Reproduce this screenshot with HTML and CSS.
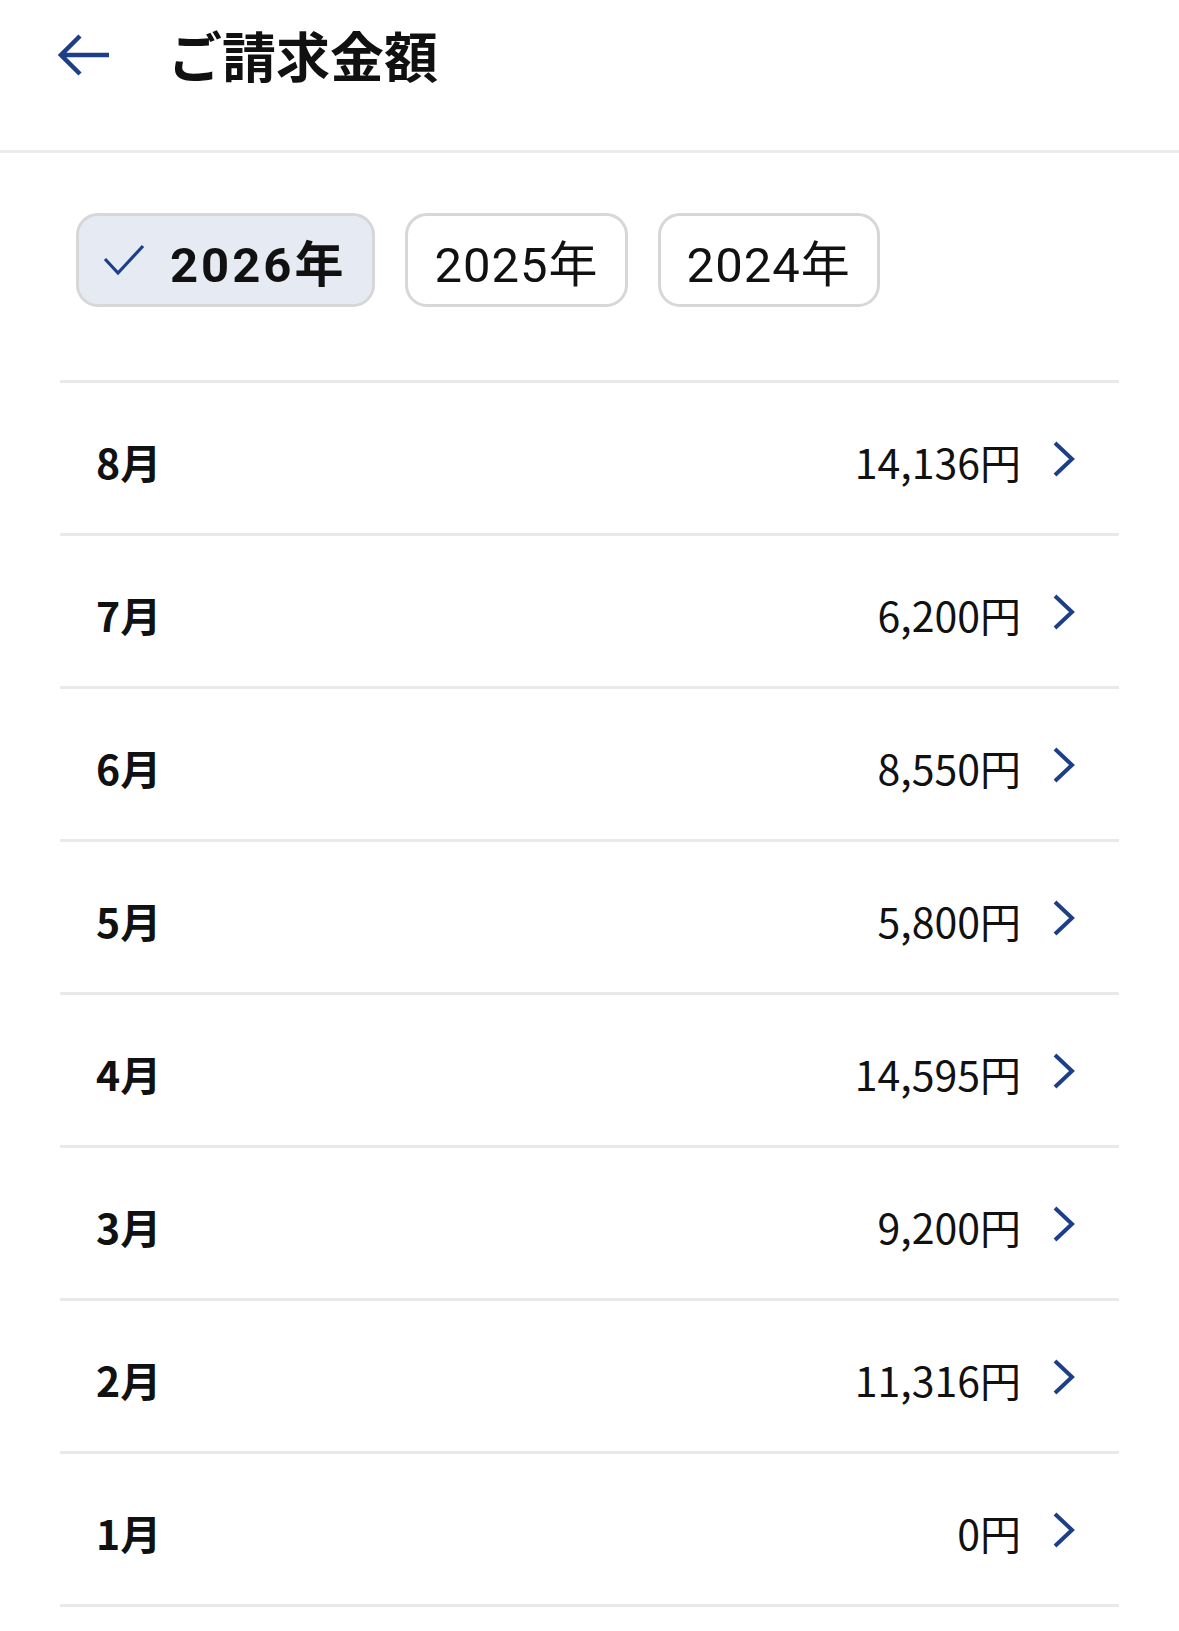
FILE: index.html
```html
<!DOCTYPE html>
<html lang="ja">
<head>
  <meta charset="UTF-8"/>
  <meta name="viewport" content="width=device-width,initial-scale=1"/>
  <title>ご請求金額</title>
  <link rel="stylesheet" href="styles.css">
</head>
<body>

  <header class="top-bar">
    <a class="back" href="#" aria-label="戻る">
      <svg width="52" height="42" viewBox="0 0 52 42">
        <path d="M22 2 L3 21 L22 40 M3 21 H51" fill="none" stroke="#1d3f88" stroke-width="4.5"/>
      </svg>
    </a>
    <h1>ご請求金額</h1>
  </header>

  <main id="bills">
    <div class="years">
      <button class="chip selected">
        <svg class="check" width="42" height="32" viewBox="0 0 42 32">
          <path d="M2 15 L15 29 L40 2" fill="none" stroke="#1d3f88" stroke-width="3.2"/>
        </svg>
        <span>2026年</span>
      </button>
      <button class="chip">2025年</button>
      <button class="chip">2024年</button>
    </div>

    <ul class="months">
      <li class="row"><span class="month">8月</span><span class="amount">14,136円</span><svg class="chev" width="22" height="36" viewBox="0 0 22 36"><path d="M2 2 L19 18 L2 34" fill="none" stroke="#1d3f88" stroke-width="4"/></svg></li>
      <li class="row"><span class="month">7月</span><span class="amount">6,200円</span><svg class="chev" width="22" height="36" viewBox="0 0 22 36"><path d="M2 2 L19 18 L2 34" fill="none" stroke="#1d3f88" stroke-width="4"/></svg></li>
      <li class="row"><span class="month">6月</span><span class="amount">8,550円</span><svg class="chev" width="22" height="36" viewBox="0 0 22 36"><path d="M2 2 L19 18 L2 34" fill="none" stroke="#1d3f88" stroke-width="4"/></svg></li>
      <li class="row"><span class="month">5月</span><span class="amount">5,800円</span><svg class="chev" width="22" height="36" viewBox="0 0 22 36"><path d="M2 2 L19 18 L2 34" fill="none" stroke="#1d3f88" stroke-width="4"/></svg></li>
      <li class="row"><span class="month">4月</span><span class="amount">14,595円</span><svg class="chev" width="22" height="36" viewBox="0 0 22 36"><path d="M2 2 L19 18 L2 34" fill="none" stroke="#1d3f88" stroke-width="4"/></svg></li>
      <li class="row"><span class="month">3月</span><span class="amount">9,200円</span><svg class="chev" width="22" height="36" viewBox="0 0 22 36"><path d="M2 2 L19 18 L2 34" fill="none" stroke="#1d3f88" stroke-width="4"/></svg></li>
      <li class="row"><span class="month">2月</span><span class="amount">11,316円</span><svg class="chev" width="22" height="36" viewBox="0 0 22 36"><path d="M2 2 L19 18 L2 34" fill="none" stroke="#1d3f88" stroke-width="4"/></svg></li>
      <li class="row"><span class="month">1月</span><span class="amount">0円</span><svg class="chev" width="22" height="36" viewBox="0 0 22 36"><path d="M2 2 L19 18 L2 34" fill="none" stroke="#1d3f88" stroke-width="4"/></svg></li>
    </ul>
  </main>

</body>
</html>
```

FILE: styles.css
```css
* {
  box-sizing: border-box;
}
body {
  margin: 0;
  font-family: 'Noto Sans CJK JP', sans-serif;
  background: #fff;
  color: #111;
}

.top-bar {
  display: flex;
  align-items: center;
  height: 153px;
  padding: 0 58px 40px;
  border-bottom: 3px solid #ececec;
}

.back {
  display: flex;
  margin-right: 58px;
}

.top-bar h1 {
  margin: 0;
  font-size: 54px;
  font-weight: 700;
  line-height: 1;
}

#bills {
  padding: 0 60px;
}

.years {
  display: flex;
  gap: 30px;
  padding: 60px 0 73px 16px;
}

.chip {
  display: flex;
  align-items: center;
  gap: 25px;
  height: 94px;
  padding: 0 26px;
  border: 3px solid #d7d7d7;
  border-radius: 22px;
  background: #fff;
  color: #111;
  font-family: Roboto, 'Noto Sans CJK JP', sans-serif;
  font-size: 49px;
  letter-spacing: 1px;
}

.chip.selected {
  background: #e6eaf3;
  font-weight: 700;
  padding-left: 24px;
  letter-spacing: 3px;
}

.months {
  list-style: none;
  margin: 0;
  padding: 0;
  border-top: 3px solid #e9e9e9;
}

.row {
  display: flex;
  align-items: center;
  height: 153px;
  padding: 6px 44px 0 36px;
  border-bottom: 3px solid #e9e9e9;
}

.month {
  flex: 1;
  font-size: 41px;
  font-weight: 700;
}

.amount {
  font-size: 41px;
  margin-right: 32px;
}

.chev {
  margin-top: -4px;
}
```
